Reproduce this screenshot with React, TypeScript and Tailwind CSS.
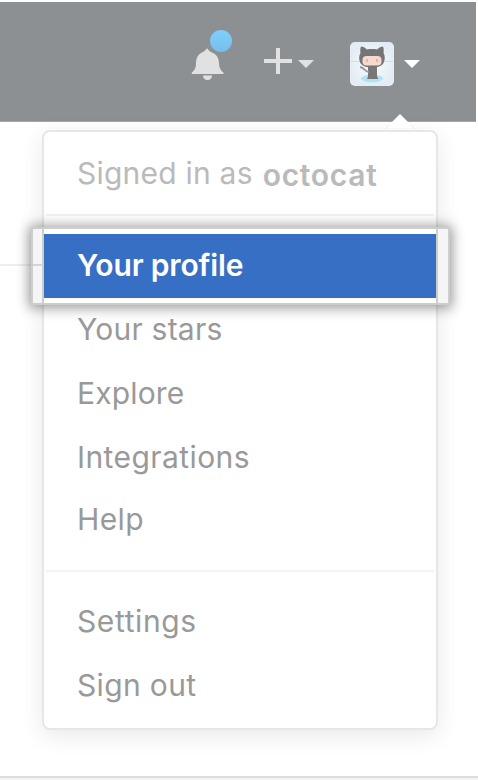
type Item = { label: string; className: string };

const links: Item[] = [
  { label: 'Your stars', className: 'h-16 tracking-[0.22px]' },
  { label: 'Explore', className: 'h-16 tracking-[0.15px]' },
  { label: 'Integrations', className: 'h-16 tracking-[0.42px]' },
  { label: 'Help', className: 'h-[60px] tracking-[0.4px]' },
];

const accountLinks: Item[] = [
  { label: 'Settings', className: 'h-16 tracking-[0.62px]' },
  { label: 'Sign out', className: 'h-16 tracking-[0.35px]' },
];

function Caret({ className }: { className: string }) {
  return (
    <svg viewBox="0 0 16 8" className={`h-2 w-4 ${className}`} fill="currentColor">
      <path d="M0 0h16L8 8z" />
    </svg>
  );
}

function Bell() {
  return (
    <div className="relative mt-px h-[33px] w-[33px] text-[#e1e1e1]">
      <svg viewBox="0 0 33 33" className="h-[33px] w-[33px]" fill="currentColor">
        <path d="M16 .3c1.200 1.500 2 2.700 4 3.700 6 2.500 7.700 6 8 11 .3 4.500.8 6.500 4.500 9.500v1.500H.8v-1.500C4.500 21.500 4.800 19.500 5 15c.3-5 1.500-8.500 7-11 2-1 2.800-2.200 4-3.700z" />
        <path d="M12 27.500h9c0 2.500-1.500 4.500-4.500 4.500S12 30 12 27.500z" />
      </svg>
      <span className="absolute -top-[18px] left-[19px] h-[22px] w-[22px] rounded-full bg-linear-to-b from-[#80cffc] to-[#77bdea]" />
    </div>
  );
}

function Avatar() {
  return (
    <svg viewBox="0 0 44 44" className="h-11 w-11 rounded-[5px]">
      <defs>
        <radialGradient id="sky">
          <stop offset="0" stopColor="#fafcfe" />
          <stop offset="1" stopColor="#e4edf5" />
        </radialGradient>
        <filter id="soft">
          <feGaussianBlur stdDeviation="0.5" />
        </filter>
      </defs>
      <rect width="44" height="44" fill="url(#sky)" />
      <path d="M0 19.500h44" stroke="#d3dfe9" />
      <g filter="url(#soft)">
        <ellipse cx="22" cy="36.500" rx="11" ry="4" fill="#b5e0f5" />
        <path d="M18 25h9v9.500c1 1 1 1.500 1 2.500H17c0-1 1-1.500 1-2.500z" fill="#777" />
        <path d="M19 30c-4 0-4-4-9-5" fill="none" stroke="#999" strokeWidth="2" />
        <path d="M11 4.500c2.500 0 4.500 1.500 6 3 3-.6 7-.6 10 0 1.500-1.500 3.500-3 6-3 1 2.500.8 5 .5 6.500 2 3 1.500 8-.5 11-2 2.500-6 3.500-11 3.500S13 24.500 11 22c-2-3-2.500-8-.5-11-.3-1.500-.5-4 .5-6.500z" fill="#747474" />
        <rect x="12.500" y="14" width="19" height="9.500" rx="4" fill="#f7d9cf" />
        <ellipse cx="17" cy="18.500" rx="1.200" ry="1.800" fill="#dcb5ac" />
        <ellipse cx="27" cy="18.500" rx="1.200" ry="1.800" fill="#dcb5ac" />
      </g>
    </svg>
  );
}

function MenuItem({ label, className }: Item) {
  return <a className={`flex items-center pl-[33px] text-[#999999] ${className}`}>{label}</a>;
}

export default function App() {
  return (
    <div className="relative isolate flex h-[780px] w-[478px] flex-col overflow-hidden bg-white pt-0.5 font-['Inter','Liberation_Sans',sans-serif] text-[30px] leading-none">
      <header className="flex h-[120px] w-[476px] shrink-0 items-center border-b border-[#a4a7a7] bg-[#8c9092] pl-[191px]">
        <div className="flex items-center pt-1">
          <Bell />
          <svg viewBox="0 0 28 26" className="-mt-[5px] ml-10 h-[26px] w-7 text-[#e1e1e1]" fill="currentColor">
            <path d="M12 0h4v11h12v4H16v11h-4V15H0v-4h12z" />
          </svg>
          <Caret className="ml-1.5 text-[#e1e1e1]" />
          <div className="ml-9 flex items-center">
            <Avatar />
            <Caret className="ml-2.5 text-white" />
          </div>
        </div>
      </header>

      <div className="absolute left-0 top-[264px] -z-10 h-0.5 w-[44px] bg-[#eeeeee]" />

      <nav className="relative ml-[42px] mt-2 h-[600px] w-[396px] rounded-[8px] border-2 border-[#e7e7e7] bg-white shadow-[0_6px_24px_rgba(0,0,0,0.09)]">
        <svg viewBox="0 0 32 16" className="absolute -top-[18px] right-[20px] h-4 w-8">
          <path d="M2 14 16 0 30 14z" fill="white" />
          <path d="M1 15 5 11M31 15 27 11" stroke="#e7e7e7" />
        </svg>
        <div className="mx-0.5 flex h-[84px] items-center border-b-2 border-[#f2f2f2] pl-[31px] text-[#bababa]">
          <span className="tracking-[0.22px]">Signed in as</span>
          <strong className="ml-2.5 mt-[3px] font-semibold tracking-[0.7px]">octocat</strong>
        </div>

        <div className="relative -ml-[13px] mt-[11px] flex h-[78px] w-[419px] items-center border-2 border-[#cdcdcd] bg-[#f5f5f5] shadow-[0_1px_12px_2px_rgba(0,0,0,0.4)]">
          <div className="absolute left-0 top-[35px] h-0.5 w-2.5 bg-[#d4d4d4]" />
          <div className="ml-[9px] flex h-[74px] w-[396px] items-center border-x-2 border-[#cdcdcd] bg-white">
            <a className="flex h-16 w-full items-center bg-[#366fc3] pb-0.5 pl-[33px] font-semibold tracking-[-0.15px] text-white">Your profile</a>
          </div>
        </div>

        <div className="-mt-2 flex flex-col">
          {links.map((item) => (
            <MenuItem key={item.label} {...item} />
          ))}
        </div>

        <div className="mx-0.5 mt-[21px] h-0.5 bg-[#f4f4f4]" />

        <div className="mt-[17px] flex flex-col">
          {accountLinks.map((item) => (
            <MenuItem key={item.label} {...item} />
          ))}
        </div>
      </nav>

      <div className="absolute bottom-0 left-0 h-1 w-full border-t-2 border-[#dcdcdc] bg-[#f3f3f3]" />
    </div>
  );
}
